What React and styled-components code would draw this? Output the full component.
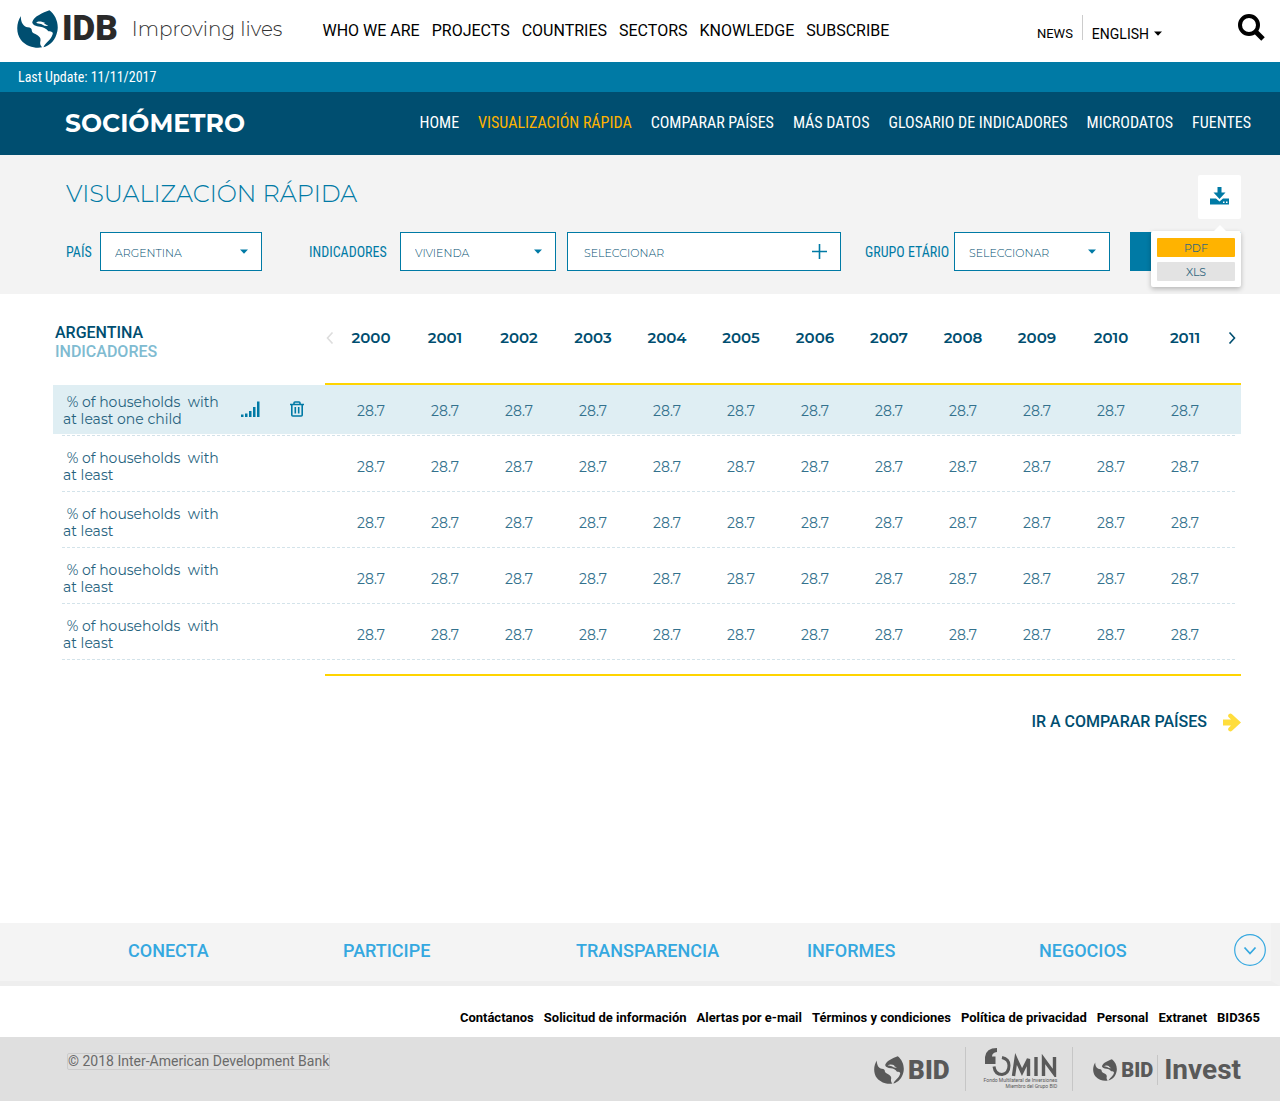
import React, { useState } from 'react';
import styled, { createGlobalStyle } from 'styled-components';

const GlobalStyle = createGlobalStyle`
  * {
    box-sizing: border-box;
  }
  body {
    margin: 0;
    background-color: white;
    font-family: Montserrat, Lato, sans-serif;
    color: #004e70;
  }
  a {
    color: inherit;
    text-decoration: none;
  }
  button, select {
    font-family: inherit;
    color: inherit;
    cursor: pointer;
  }
  svg {
    display: block;
    flex: none;
  }
`;

const Page = styled.div`
  display: flex;
  flex-direction: column;
  min-height: 100vh;
`;

/* header */

const TopHeader = styled.header`
  display: flex;
  align-items: center;
  height: 62px;
  padding: 0 15px 0 17px;
  color: black;
  font-family: Roboto, sans-serif;
`;

const Brand = styled.a`
  display: flex;
  align-items: center;
  gap: 4px;
  margin-right: 40px;
  padding-bottom: 4px;
`;

const BrandName = styled.strong`
  font-size: 35px;
  line-height: 36px;
  font-weight: 900;
  color: #2a2a2a;
`;

const BrandMotto = styled.span`
  margin-left: 10px;
  font-family: Montserrat, Lato, sans-serif;
  font-size: 20px;
  font-weight: 300;
  color: #333333;
`;

const SiteNav = styled.nav`
  display: flex;
  gap: 12px;
  padding-bottom: 2px;
  font-size: 16px;
`;

const Tools = styled.div`
  display: flex;
  align-items: center;
  margin-left: auto;
`;

const NewsLink = styled.a`
  margin-top: 4px;
  padding-right: 9px;
  font-size: 13px;
`;

const LanguageButton = styled.button`
  display: flex;
  align-items: center;
  gap: 5px;
  height: 25px;
  padding: 12px 0 0 9px;
  margin: 0 76px 7px 0;
  border: none;
  border-left: 1px solid #cccccc;
  background: none;
  font-size: 14px;
`;

const IconButton = styled.button`
  padding: 0;
  border: none;
  background: none;
`;

const SearchButton = styled(IconButton)`
  margin-bottom: 7px;
`;

const UpdateBar = styled.div`
  padding: 0 18px;
  background-color: #007aa5;
  color: white;
  font-family: 'Roboto Condensed', Roboto, sans-serif;
  font-size: 14px;
  line-height: 30px;
`;

const AppBar = styled.div`
  display: flex;
  align-items: center;
  justify-content: space-between;
  height: 63px;
  padding: 0 29px 2px 65px;
  background-color: #004e70;
  color: white;
`;

const AppName = styled.span`
  font-size: 25px;
  font-weight: 700;
`;

const AppNav = styled.nav`
  display: flex;
  gap: 19px;
  font-family: 'Roboto Condensed', Roboto, sans-serif;
  font-size: 16px;
`;

const AppNavLink = styled.a`
  color: ${(props) => (props.$active ? '#ffb300' : 'white')};
`;

/* filters */

const FilterPanel = styled.section`
  height: 139px;
  padding: 20px 39px 0 66px;
  background-color: #f3f3f3;
  color: #007aa5;
`;

const TitleRow = styled.div`
  display: flex;
  justify-content: space-between;
  align-items: flex-start;
  height: 57px;
`;

const Title = styled.h1`
  margin: 0;
  font-size: 24px;
  line-height: 38px;
  font-weight: 300;
`;

const DownloadBox = styled.div`
  position: relative;
`;

const DownloadButton = styled.button`
  display: flex;
  align-items: center;
  justify-content: center;
  width: 43px;
  height: 44px;
  padding: 0 0 3px;
  border: none;
  border-radius: 2px;
  background-color: white;
`;

const DownloadMenu = styled.div`
  position: absolute;
  top: 56px;
  right: 0;
  z-index: 1;
  display: flex;
  flex-direction: column;
  gap: 5px;
  width: 90px;
  padding: 7px 6px 6px;
  background-color: white;
  border-radius: 2px;
  box-shadow: 0 2px 5px rgba(0, 0, 0, 0.25);

  &::before {
    content: '';
    position: absolute;
    right: 15px;
    bottom: 100%;
    border: 6px solid transparent;
    border-top: none;
    border-bottom-color: white;
  }
`;

const FormatButton = styled.button`
  height: 19px;
  padding: 0;
  border: none;
  border-radius: 1px;
  background-color: ${(props) => (props.$active ? '#ffb300' : '#e3e3e3')};
  color: #33687f;
  font-size: 11px;
`;

const FilterRow = styled.form`
  display: flex;
  align-items: center;
`;

const FilterLabel = styled.label`
  width: ${(props) => props.$width}px;
  flex: none;
  font-family: 'Roboto Condensed', Roboto, sans-serif;
  font-size: 14px;
  white-space: nowrap;
`;

const SelectBox = styled.div`
  display: grid;
  align-items: center;
  width: ${(props) => props.$width}px;
  margin-right: ${(props) => props.$after}px;

  & > * {
    grid-area: 1 / 1;
  }
  & > svg {
    justify-self: end;
    margin-right: 14px;
    pointer-events: none;
  }
`;

const Select = styled.select`
  appearance: none;
  height: 39px;
  padding: 2px 14px 0;
  border: 1px solid #007aa5;
  border-radius: 0;
  background-color: white;
  color: #004e70;
  font-size: 11px;
  font-weight: 300;
`;

const PickerButton = styled.button`
  display: flex;
  flex: 1;
  align-items: center;
  justify-content: space-between;
  height: 39px;
  margin-right: 24px;
  padding: 0 13px 0 16px;
  border: 1px solid #007aa5;
  background-color: white;
  color: #004e70;
  font-size: 11px;
  font-weight: 300;
`;

const PickerText = styled.span`
  padding-top: 2px;
`;

const SubmitButton = styled.button`
  width: 111px;
  height: 39px;
  border: none;
  background-color: #007aa5;
`;

/* table */

const Main = styled.main`
  flex: 1;
  padding: 0 39px 0 53px;
`;

const DataTable = styled.table`
  width: 100%;
  table-layout: fixed;
  border-spacing: 0;
`;

const Col = styled.col`
  width: ${(props) => props.$width}px;
`;

const HeadCell = styled.th`
  height: 91px;
  padding: 34px 0 0;
  border-bottom: 2px solid #ffd400;
  vertical-align: top;
  font-size: 15px;
  line-height: 19px;
  font-weight: 600;
`;

const CornerCell = styled.th`
  padding: 29px 0 0 2px;
  vertical-align: top;
  text-align: left;
  font-family: Roboto, sans-serif;
  font-size: 16px;
  line-height: 19px;
  font-weight: 500;
`;

const CornerSub = styled.div`
  color: #80bbd1;
`;

const ArrowButton = styled(IconButton)`
  display: flex;
  align-items: center;
  justify-content: center;
  width: 100%;
  height: 19px;
`;

const Row = styled.tr`
  height: ${(props) => (props.$active ? 51 : 56)}px;
  background-image:
    repeating-linear-gradient(90deg, #d3e3ea 0 3px, transparent 3px 5px),
    linear-gradient(#dfeef3, #dfeef3);
  background-repeat: no-repeat;
  background-position: 9px 100%, 0 0;
  background-size: calc(100% - 14px) 1px, ${(props) => (props.$active ? '100% 49px' : '0 0')};

  & > * {
    padding: ${(props) => (props.$active ? 1 : 6)}px 0 0;
  }
`;

const ValueCell = styled.td`
  color: #33718d;
  font-size: 14px;
  line-height: 18px;
  text-align: center;
`;

const NameCell = styled.th`
  font-size: 14px;
  line-height: 17px;
  font-weight: 400;
  text-align: left;
`;

const NameContent = styled.div`
  display: flex;
  align-items: center;
  padding-left: 10px;
  color: #26627e;
`;

const NameText = styled.span`
  width: 178px;
  white-space: pre;
`;

const RowActions = styled.span`
  display: flex;
  align-items: center;
  gap: 30px;
  padding-bottom: 4px;
`;

const FootCell = styled.td`
  height: 16px;
  padding: 0;
  border-bottom: 2px solid #ffd400;
`;

const CompareLink = styled.a`
  display: flex;
  align-items: center;
  justify-content: flex-end;
  gap: 16px;
  margin-top: 36px;
  font-family: Roboto, sans-serif;
  font-size: 16px;
  line-height: 20px;
  font-weight: 500;
`;

/* footer */

const FooterNav = styled.nav`
  display: grid;
  grid-template-columns: 215fr 233fr 231fr 232fr 195fr 32px;
  align-items: center;
  height: 63px;
  padding: 0 5px 4px 128px;
  border-right: 9px solid #f1f1f1;
  border-bottom: 5px solid #eeeeee;
  background-color: #f4f4f4;
  color: #35a8e0;
  font-family: Roboto, sans-serif;
  font-size: 18px;
  font-weight: 500;
`;

const FooterLinks = styled.nav`
  display: flex;
  align-items: center;
  justify-content: flex-end;
  gap: 10px;
  height: 51px;
  padding: 11px 20px 0 0;
  color: black;
  font-family: Roboto, sans-serif;
  font-size: 13px;
  font-weight: 700;
`;

const BottomBar = styled.div`
  display: flex;
  justify-content: space-between;
  height: 64px;
  padding: 10px 39px 0 67px;
  background-color: #dfdfdf;
  color: #595959;
  font-family: Roboto, sans-serif;
`;

const Copyright = styled.span`
  height: 17px;
  margin-top: 6px;
  border: 1px solid #cccccc;
  border-radius: 2px;
  font-size: 14px;
  line-height: 15px;
  color: #6a6a6a;
`;

const Partners = styled.div`
  display: flex;
  height: 44px;
`;

const Partner = styled.a`
  display: flex;
  align-items: center;
  gap: 4px;
  padding: 2px 15px 0 0;

  & + & {
    border-left: 1px solid #c6c6c6;
    padding-left: 18px;
  }
  &:last-child {
    padding-right: 0;
    padding-left: 20px;
  }
`;

const PartnerName = styled.strong`
  font-size: ${(props) => (props.$small ? 20 : 26)}px;
  line-height: 30px;
  font-weight: 900;
`;

const InvestName = styled.span`
  padding-left: 6px;
  border-left: 1px solid #c6c6c6;
  font-size: 28px;
  line-height: 30px;
  font-weight: 700;
`;

const Fomin = styled.span`
  display: flex;
  flex-direction: column;
  align-items: flex-end;
  padding-bottom: 3px;
  font-size: 5px;
  line-height: 6px;
`;

const Globe = ({ width, height, color, hole }) => (
  <svg width={width} height={height} viewBox="50 28 124 114" preserveAspectRatio="none">
    <path fill={color} d="M62 46C60 62 69 79 82 80C91 80 95 84 95 91C96 98 106 99 112 104C118 108 122 112 121 120C119 128 120 134 126 140C108 144 79 139 62 118C46 98 48 65 62 46Z" />
    <path fill={color} d="M96 65C102 46 128 37 148 29C166 42 177 68 172 92C167 118 150 135 130 140C134 127 154 118 158 100C160 94 152 92 145 92C139 84 130 79 120 78C107 77 98 74 96 65Z" />
    <path fill={hole} d="M108 66C113 60 126 62 136 67L131 68L145 76L133 75L123 70C117 68 112 69 108 66Z" />
  </svg>
);

const SearchIcon = () => (
  <svg width="27" height="27" viewBox="0 0 27 27" fill="none" stroke="black">
    <circle cx="11" cy="11" r="9" strokeWidth="4" />
    <path d="M17.500 17.500L25 25" strokeWidth="5" />
  </svg>
);

const Caret = ({ color }) => (
  <svg width="8" height="5" viewBox="0 0 8 5">
    <path fill={color} d="M0 0.500H8L4 4.800Z" />
  </svg>
);

const PlusIcon = () => (
  <svg width="15" height="15" viewBox="0 0 15 15" stroke="#007aa5" strokeWidth="1.600">
    <path d="M7.500 0V15M0 7.500H15" />
  </svg>
);

const DownloadIcon = () => (
  <svg width="19" height="18" viewBox="0 0 19 18">
    <path fill="#007aa5" d="M7.500 0H11.500V5.500H15.500L9.500 12L3.500 5.500H7.500Z" />
    <path fill="#007aa5" d="M0 11.500H6L9.500 14.500L13 11.500H19V17.500H0Z" />
    <path fill="white" d="M13 14.500h1.500v1.500H13zM16 14.500h1.500v1.500h-1.500z" />
  </svg>
);

const BarsIcon = () => (
  <svg width="19" height="16" viewBox="0 0 19 16" fill="#007aa5">
    <path d="M0 13.500h2.500v2.500H0zM4 12.500h2.500V16H4zM8 10h2.500v6H8zM12 6h2.500v10H12zM16 0.500h2.500V16H16z" />
  </svg>
);

const TrashIcon = () => (
  <svg width="14" height="16" viewBox="0 0 14 16" fill="none" stroke="#007aa5" strokeWidth="1.600">
    <path d="M0 3.500H14M4 3.500V2Q4 1 5 1H9Q10 1 10 2V3.500M1.800 3.500V14Q1.800 15 2.800 15H11.200Q12.200 15 12.200 14V3.500M5.300 6V12.500M8.700 6V12.500" />
  </svg>
);

const Chevron = ({ d, color }) => (
  <svg width="8" height="12" viewBox="0 0 8 12" fill="none" stroke={color} strokeWidth="1.600">
    <path d={d} />
  </svg>
);

const ArrowIcon = () => (
  <svg width="18" height="19" viewBox="0 0 18 19">
    <path fill="#ffdd3c" d="M0 6.500H8L5.500 4Q4.500 2.500 5.800 1.200Q7.500 -0.300 9 1.200L18 9.500L9 17.800Q7.500 19.300 5.800 17.800Q4.500 16.500 5.500 15L8 12.500H0Z" />
  </svg>
);

const CircleDownIcon = () => (
  <svg width="32" height="32" viewBox="0 0 32 32" fill="none" stroke="#35a8e0">
    <circle cx="16" cy="16" r="15.300" strokeWidth="1.200" />
    <path d="M10.500 13.500L16 19.500L21.500 13.500" strokeWidth="1.800" />
  </svg>
);

const FominIcon = () => (
  <svg width="72" height="29" viewBox="0 0 72 29" fill="none" stroke="#595959">
    <path fill="#595959" stroke="none" d="M0 16V9Q1 0 12 0V4Q7 4.500 7 8.500H10.500V16Z" />
    <path strokeWidth="3" d="M9 18.500Q10 26.500 17 26.500Q24 25.500 24 17.500Q24 11 17 9.500" />
    <path strokeWidth="3.400" d="M28.500 28L31 11L37 24L43.500 11V28M51 9V28M58.500 28V11L69.500 26V9" />
  </svg>
);

const siteLinks = ['WHO WE ARE', 'PROJECTS', 'COUNTRIES', 'SECTORS', 'KNOWLEDGE', 'SUBSCRIBE'];
const appLinks = ['HOME', 'VISUALIZACIÓN RÁPIDA', 'COMPARAR PAÍSES', 'MÁS DATOS', 'GLOSARIO DE INDICADORES', 'MICRODATOS', 'FUENTES'];
const years = [2000, 2001, 2002, 2003, 2004, 2005, 2006, 2007, 2008, 2009, 2010, 2011];
const rows = [
  ' % of households  with\nat least one child',
  ' % of households  with\nat least',
  ' % of households  with\nat least',
  ' % of households  with\nat least',
  ' % of households  with\nat least',
];
const footerSections = ['CONECTA', 'PARTICIPE', 'TRANSPARENCIA', 'INFORMES', 'NEGOCIOS'];
const footerLinks = [
  'Contáctanos',
  'Solicitud de información',
  'Alertas por e-mail',
  'Términos y condiciones',
  'Política de privacidad',
  'Personal',
  'Extranet',
  'BID365',
];

const Header = () => (
  <>
    <TopHeader>
      <Brand href="#">
        <Globe width={41} height={38} color="#004e70" hole="white" />
        <BrandName>IDB</BrandName>
        <BrandMotto>Improving lives</BrandMotto>
      </Brand>
      <SiteNav>
        {siteLinks.map((link) => (
          <a href="#" key={link}>{link}</a>
        ))}
      </SiteNav>
      <Tools>
        <NewsLink href="#">NEWS</NewsLink>
        <LanguageButton>
          ENGLISH
          <Caret color="black" />
        </LanguageButton>
        <SearchButton aria-label="Search">
          <SearchIcon />
        </SearchButton>
      </Tools>
    </TopHeader>
    <UpdateBar>Last Update: 11/11/2017</UpdateBar>
    <AppBar>
      <AppName>SOCIÓMETRO</AppName>
      <AppNav>
        {appLinks.map((link, index) => (
          <AppNavLink href="#" key={link} $active={index === 1}>{link}</AppNavLink>
        ))}
      </AppNav>
    </AppBar>
  </>
);

const FilterSelect = ({ id, label, labelWidth, width, after, option }) => (
  <>
    <FilterLabel htmlFor={id} $width={labelWidth}>{label}</FilterLabel>
    <SelectBox $width={width} $after={after}>
      <Select id={id}>
        <option>{option}</option>
      </Select>
      <Caret color="#007aa5" />
    </SelectBox>
  </>
);

const Filters = () => {
  const [menuOpen, setMenuOpen] = useState(true);

  return (
    <FilterPanel>
      <TitleRow>
        <Title>VISUALIZACIÓN RÁPIDA</Title>
        <DownloadBox>
          <DownloadButton aria-label="Descargar" onClick={() => setMenuOpen(!menuOpen)}>
            <DownloadIcon />
          </DownloadButton>
          {menuOpen && (
            <DownloadMenu>
              <FormatButton $active>PDF</FormatButton>
              <FormatButton>XLS</FormatButton>
            </DownloadMenu>
          )}
        </DownloadBox>
      </TitleRow>
      <FilterRow>
        <FilterSelect id="pais" label="PAÍS" labelWidth={34} width={162} after={47} option="ARGENTINA" />
        <FilterSelect id="indicadores" label="INDICADORES" labelWidth={91} width={156} after={11} option="VIVIENDA" />
        <PickerButton type="button">
          <PickerText>SELECCIONAR</PickerText>
          <PlusIcon />
        </PickerButton>
        <FilterSelect id="grupo" label="GRUPO ETÁRIO" labelWidth={89} width={156} after={20} option="SELECCIONAR" />
        <SubmitButton type="button" aria-label="Buscar" />
      </FilterRow>
    </FilterPanel>
  );
};

const IndicatorTable = () => (
  <DataTable>
    <colgroup>
      <Col $width={272} />
      <Col $width={9} />
      {years.map((year) => <col key={year} />)}
      <Col $width={19} />
    </colgroup>
    <thead>
      <tr>
        <CornerCell>
          ARGENTINA
          <CornerSub>INDICADORES</CornerSub>
        </CornerCell>
        <HeadCell>
          <ArrowButton aria-label="Anterior">
            <Chevron d="M6.500 0.500L1.500 6L6.500 11.500" color="#dddddd" />
          </ArrowButton>
        </HeadCell>
        {years.map((year) => (
          <HeadCell key={year} scope="col">{year}</HeadCell>
        ))}
        <HeadCell>
          <ArrowButton aria-label="Siguiente">
            <Chevron d="M1.500 0.500L6.500 6L1.500 11.500" color="#004e70" />
          </ArrowButton>
        </HeadCell>
      </tr>
    </thead>
    <tbody>
      {rows.map((name, index) => (
        <Row key={index} $active={index === 0}>
          <NameCell scope="row">
            <NameContent>
              <NameText>{name}</NameText>
              {index === 0 && (
                <RowActions>
                  <IconButton aria-label="Ver gráfico"><BarsIcon /></IconButton>
                  <IconButton aria-label="Eliminar"><TrashIcon /></IconButton>
                </RowActions>
              )}
            </NameContent>
          </NameCell>
          <td />
          {years.map((year) => (
            <ValueCell key={year}>28.7</ValueCell>
          ))}
          <td />
        </Row>
      ))}
    </tbody>
    <tfoot>
      <tr>
        <td />
        <FootCell colSpan={14} />
      </tr>
    </tfoot>
  </DataTable>
);

const Footer = () => (
  <footer>
    <FooterNav>
      {footerSections.map((section) => (
        <a href="#" key={section}>{section}</a>
      ))}
      <IconButton aria-label="Ver más">
        <CircleDownIcon />
      </IconButton>
    </FooterNav>
    <FooterLinks>
      {footerLinks.map((link) => (
        <a href="#" key={link}>{link}</a>
      ))}
    </FooterLinks>
    <BottomBar>
      <Copyright>© 2018 Inter-American Development Bank</Copyright>
      <Partners>
        <Partner href="#">
          <Globe width={30} height={28} color="#595959" hole="#dfdfdf" />
          <PartnerName>BID</PartnerName>
        </Partner>
        <Partner href="#">
          <Fomin>
            <FominIcon />
            <span>Fondo Multilateral de Inversiones</span>
            <span>Miembro del Grupo BID</span>
          </Fomin>
        </Partner>
        <Partner href="#">
          <Globe width={24} height={22} color="#595959" hole="#dfdfdf" />
          <PartnerName $small>BID</PartnerName>
          <InvestName>Invest</InvestName>
        </Partner>
      </Partners>
    </BottomBar>
  </footer>
);

const App = () => (
  <Page>
    <GlobalStyle />
    <Header />
    <Filters />
    <Main>
      <IndicatorTable />
      <CompareLink href="#">
        IR A COMPARAR PAÍSES
        <ArrowIcon />
      </CompareLink>
    </Main>
    <Footer />
  </Page>
);

export default App;
